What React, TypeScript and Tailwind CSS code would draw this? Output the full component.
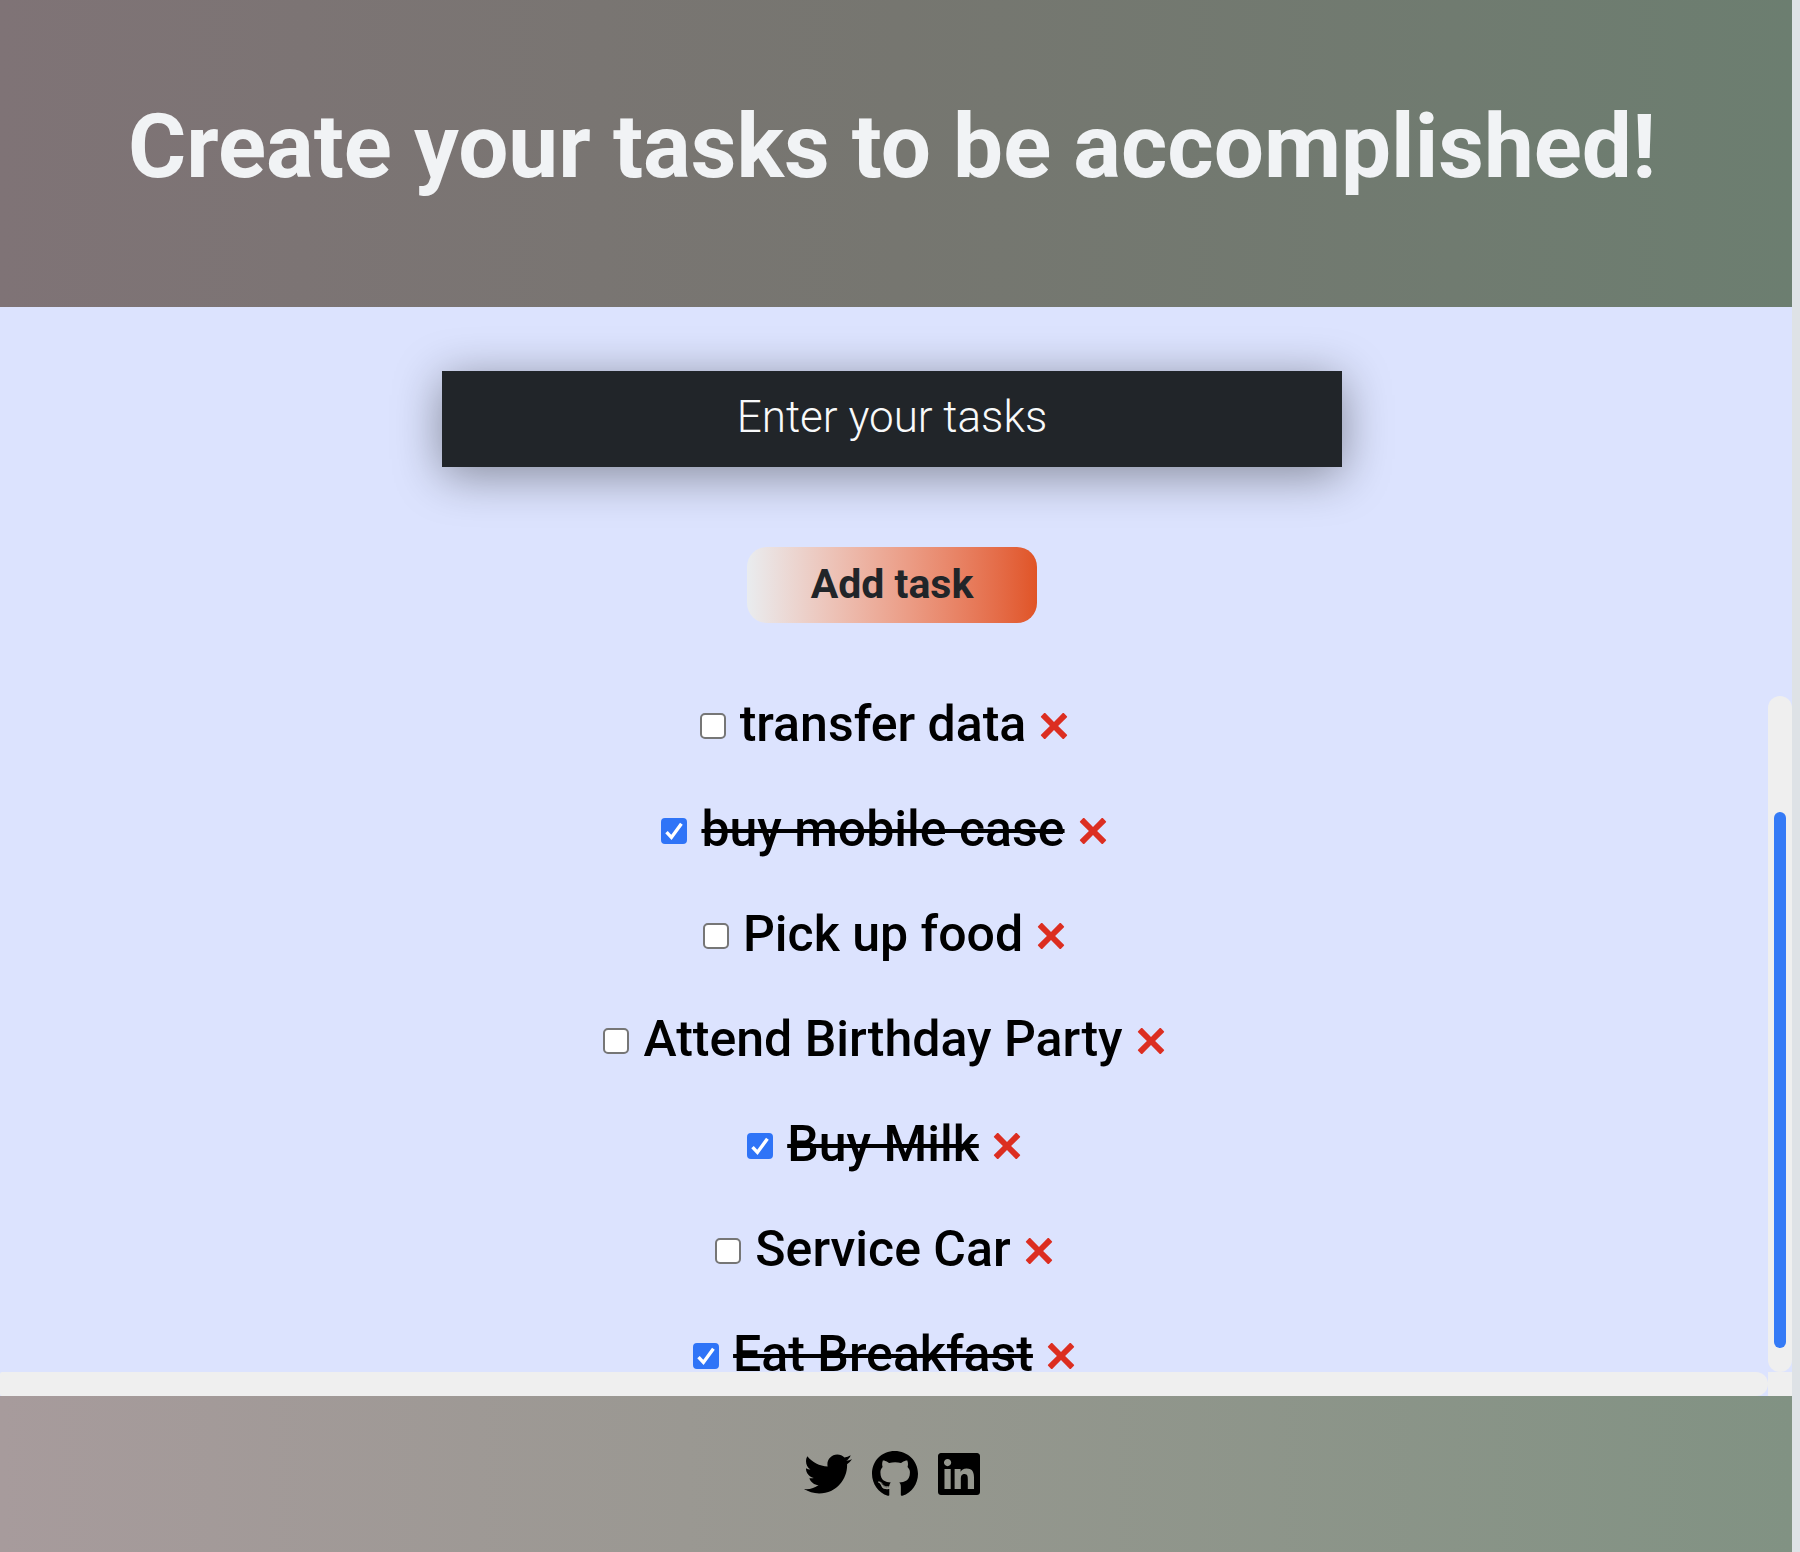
import { useState } from "react";
import { FaGithub, FaLinkedin, FaTwitter } from "react-icons/fa";

type Task = { id: number; title: string; done: boolean };

const initialTasks: Task[] = [
  { id: 1, title: "transfer data", done: false },
  { id: 2, title: "buy mobile case", done: true },
  { id: 3, title: "Pick up food", done: false },
  { id: 4, title: "Attend Birthday Party", done: false },
  { id: 5, title: "Buy Milk", done: true },
  { id: 6, title: "Service Car", done: false },
  { id: 7, title: "Eat Breakfast", done: true },
];

function CrossIcon() {
  return (
    <svg viewBox="0 0 28 28" className="size-7" aria-hidden="true">
      <path
        d="M1 5.3Q.6 4.7 1.1 4.2L4.2 1.1Q4.7.7 5.2 1.1L14 10 22.8 1.1Q23.3.7 23.8 1.1L26.9 4.2Q27.4 4.7 27 5.3L18.1 14 27 22.7Q27.4 23.3 26.9 23.8L23.8 26.9Q23.3 27.3 22.8 26.9L14 18 5.2 26.9Q4.7 27.3 4.2 26.9L1.1 23.8Q.6 23.3 1 22.7L9.9 14Z"
        fill="#dc2e21"
      />
    </svg>
  );
}

function TaskRow({ task, onToggle, onDelete }: { task: Task; onToggle: () => void; onDelete: () => void }) {
  const id = `task-${task.id}`;
  return (
    <li className="flex h-[60px] shrink-0 items-center justify-center">
      <span className="mr-3.5 grid size-[26px] place-items-center">
        <input
          id={id}
          type="checkbox"
          checked={task.done}
          onChange={onToggle}
          className="col-start-1 row-start-1 size-[26px] appearance-none rounded-[5px] border-2 border-[#767676] bg-white checked:rounded-[4px] checked:border-[#2f74f7] checked:bg-[#2f74f7]"
        />
        {task.done && (
          <svg viewBox="0 0 26 26" className="pointer-events-none col-start-1 row-start-1 size-[26px]" aria-hidden="true">
            <path d="M5.5 14.2 10.4 19.4 20.4 5.8" fill="none" stroke="#fff" strokeWidth="3.4" />
          </svg>
        )}
      </span>
      <label
        htmlFor={id}
        className={
          task.done
            ? "pb-1 text-[50px] leading-7 font-medium line-through decoration-4"
            : "pb-1 text-[50px] leading-7 font-medium"
        }
      >
        {task.title}
      </label>
      <button type="button" aria-label={`Delete ${task.title}`} onClick={onDelete} className="ml-3.5">
        <CrossIcon />
      </button>
    </li>
  );
}

export default function App() {
  const [tasks, setTasks] = useState(initialTasks);
  const [draft, setDraft] = useState("");

  const toggle = (id: number) => setTasks(tasks.map((t) => (t.id === id ? { ...t, done: !t.done } : t)));
  const remove = (id: number) => setTasks(tasks.filter((t) => t.id !== id));
  const add = () => {
    if (!draft.trim()) return;
    setTasks([{ id: Date.now(), title: draft, done: false }, ...tasks]);
    setDraft("");
  };

  return (
    <div className="h-screen bg-[#dee2e6] pr-2 font-['Roboto',sans-serif] text-black">
      <div className="flex h-full flex-col bg-[#dce3fe]">
        <header className="bg-linear-to-r from-[#7f7376] via-[#767670] to-[#6c7e70] pt-[87px] pr-10 pb-[100px] pl-8 text-center">
          <h1 className="text-[89px] leading-[120px] font-bold text-[#f1f3f5]">
            Create your tasks to be accomplished!
          </h1>
        </header>

        <form
          className="flex flex-col items-center pt-16 pr-2 pb-[73px]"
          onSubmit={(e) => {
            e.preventDefault();
            add();
          }}
        >
          <input
            type="text"
            aria-label="Enter your tasks"
            placeholder="Enter your tasks"
            value={draft}
            onChange={(e) => setDraft(e.target.value)}
            className="h-24 w-[900px] max-w-full bg-[#212529] pb-1 text-center text-[44px] font-light text-[#f8f9fa] shadow-[0_8px_48px_rgba(0,0,0,0.4)] outline-none placeholder:text-[#f8f9fa]"
          />
          <button
            type="submit"
            className="mt-20 h-[76px] rounded-[20px] bg-linear-to-r from-[#e9ecef] to-[#e05426] px-16 text-[41px] font-bold text-[#212529]"
          >
            Add task
          </button>
        </form>

        <main className="flex min-h-0 flex-1">
          <div className="flex min-w-0 flex-1 flex-col">
            <ul className="flex min-h-0 flex-1 flex-col gap-[45px] overflow-hidden">
              {tasks.map((task) => (
                <TaskRow
                  key={task.id}
                  task={task}
                  onToggle={() => toggle(task.id)}
                  onDelete={() => remove(task.id)}
                />
              ))}
            </ul>
            <div className="h-6 rounded-l-xs rounded-r-xl bg-[#efefef]" />
          </div>
          <div className="flex w-6 flex-col">
            <div className="flex flex-1 flex-col items-center rounded-xl bg-[#efefef] pt-[116px] pb-6">
              <div className="w-3 flex-1 rounded-full bg-[#347af6]" />
            </div>
            <div className="h-6 bg-[#efefef]" />
          </div>
        </main>

        <footer className="flex items-center justify-center gap-5 bg-linear-to-r from-[#a79b9c] via-[#96978f] to-[#819283] py-[54px] pr-2">
          <a href="#twitter" aria-label="Twitter">
            <FaTwitter className="h-12 w-12" />
          </a>
          <a href="#github" aria-label="GitHub">
            <FaGithub className="h-12 w-[46px]" />
          </a>
          <a href="#linkedin" aria-label="LinkedIn">
            <FaLinkedin className="h-12 w-[42px]" />
          </a>
        </footer>
      </div>
    </div>
  );
}
